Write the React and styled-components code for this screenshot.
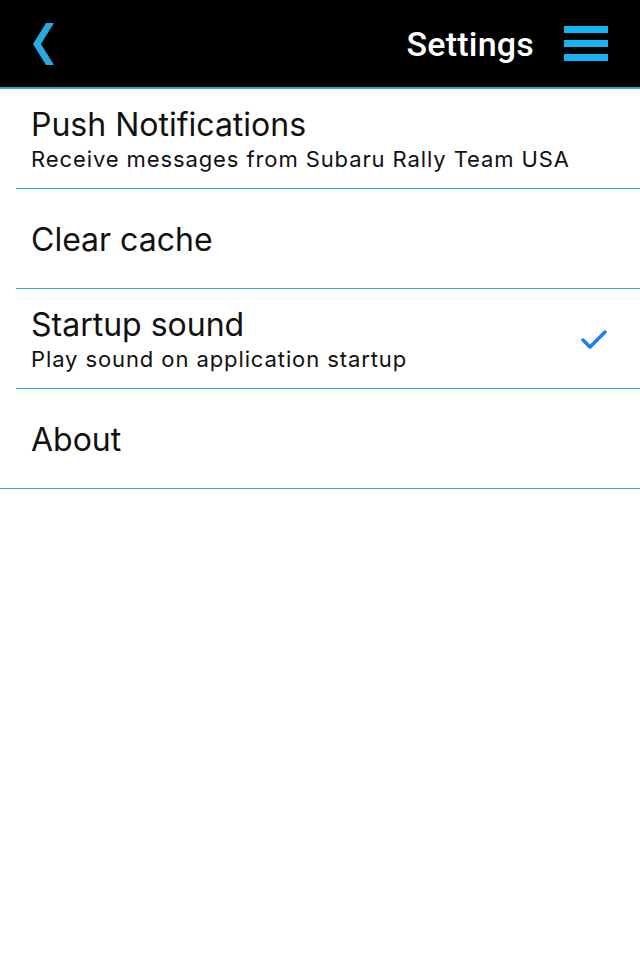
import styled, { createGlobalStyle } from "styled-components";

const GlobalStyle = createGlobalStyle`
  html, body {
    margin: 0;
    padding: 0;
    background: #ffffff;
  }
  body {
    font-family: Inter, "Liberation Sans", Arial, sans-serif;
  }
`;

const items = [
  { title: "Push Notifications", subtitle: "Receive messages from Subaru Rally Team USA" },
  { title: "Clear cache" },
  { title: "Startup sound", subtitle: "Play sound on application startup", checked: true },
  { title: "About", full: true },
];

const App = () => {
  return (
    <>
      <GlobalStyle />
      <Page>
        <Header>
          <BackButton aria-label="Back">
            <svg width="24" height="44" viewBox="0 0 24 44">
              <polygon points="21,0 13,0 0,21 13,42 21,42 8,21" fill="#29a9e0" />
            </svg>
          </BackButton>
          <HeaderRight>
            <Title>Settings</Title>
            <MenuButton aria-label="Menu">
              <MenuBar />
              <MenuBar />
              <MenuBar />
            </MenuButton>
          </HeaderRight>
        </Header>
        <List>
          {items.map((item) => (
            <Row key={item.title} $full={item.full}>
              <RowText $two={!!item.subtitle}>
                <RowTitle>{item.title}</RowTitle>
                {item.subtitle && <RowSubtitle>{item.subtitle}</RowSubtitle>}
              </RowText>
              {item.checked && (
                <Check>
                  <svg width="26" height="20" viewBox="0 0 26 20">
                    <polyline
                      points="2,11 9,18 24,3"
                      fill="none"
                      stroke="#1a7ff0"
                      strokeWidth="3.5"
                      strokeLinecap="round"
                      strokeLinejoin="round"
                    />
                  </svg>
                </Check>
              )}
            </Row>
          ))}
        </List>
      </Page>
    </>
  );
};

const Page = styled.div`
  width: 640px;
  min-height: 960px;
  background: #ffffff;
`;

const Header = styled.div`
  height: 87px;
  background: #000000;
  border-bottom: 2px solid #2aa6d6;
  display: flex;
  align-items: center;
  justify-content: space-between;
  padding: 0 32px 0 33px;
`;

const BackButton = styled.div`
  display: flex;
  align-items: center;
  padding-top: 2px;
`;

const HeaderRight = styled.div`
  display: flex;
  align-items: center;
  gap: 30px;
`;

const Title = styled.span`
  color: #ffffff;
  font-family: Roboto, "Liberation Sans", sans-serif;
  font-size: 34px;
  font-weight: 500;
  letter-spacing: 0.2px;
`;

const MenuButton = styled.div`
  display: flex;
  flex-direction: column;
  gap: 7px;
  width: 44px;
`;

const MenuBar = styled.div`
  height: 7px;
  background: #18b3f4;
`;

const List = styled.div`
  display: flex;
  flex-direction: column;
`;

const Row = styled.div`
  height: 99px;
  margin-left: ${(p) => (p.$full ? "0" : "16px")};
  padding-left: ${(p) => (p.$full ? "31px" : "15px")};
  padding-right: 33px;
  border-bottom: 1px solid #2fa4d8;
  display: flex;
  align-items: center;
  justify-content: space-between;
`;

const RowText = styled.div`
  display: flex;
  flex-direction: column;
  padding-top: ${(p) => (p.$two ? "5px" : "3px")};
`;

const RowTitle = styled.div`
  color: #111111;
  font-size: 32px;
  line-height: 36px;
`;

const RowSubtitle = styled.div`
  color: #111111;
  font-size: 22px;
  letter-spacing: 0.9px;
  line-height: 32px;
`;

const Check = styled.div`
  display: flex;
  align-items: center;
`;

export default App;
